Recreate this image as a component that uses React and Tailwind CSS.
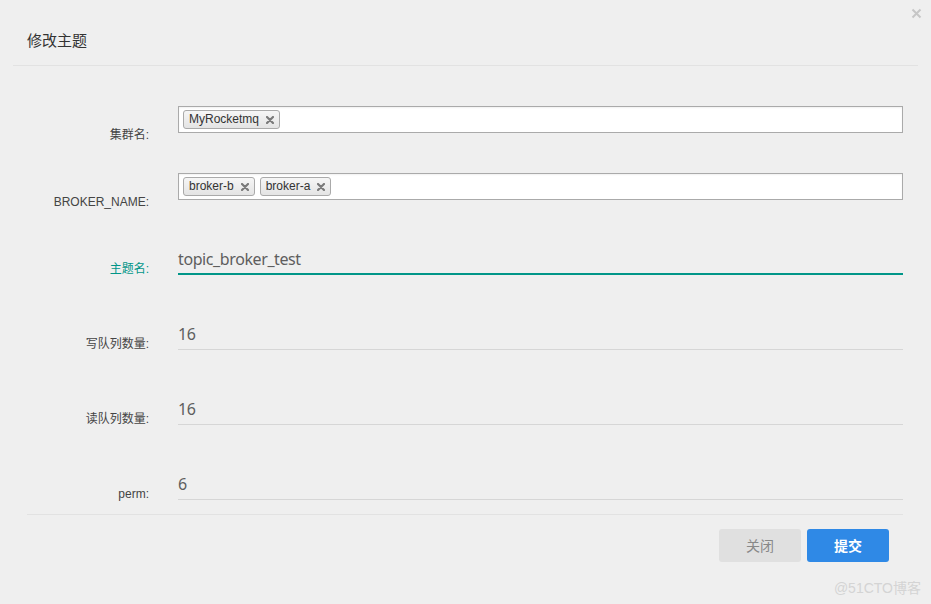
const labelFont = { fontFamily: '"Liberation Sans", "Noto Sans CJK SC", sans-serif' }

function Chip({ text }) {
  return (
    <span className="flex h-[19px] items-center gap-[7px] rounded-[3px] border border-[#aaaaaa] bg-gradient-to-b from-[#f6f6f6] to-[#e4e4e4] pl-[5px] pr-[5px] text-[12px] leading-[17px] text-[#333333]">
      {text}
      <svg width="8" height="8" viewBox="0 0 8 8" aria-hidden>
        <path d="M1 1 L7 7 M7 1 L1 7" stroke="#7a7a7a" strokeWidth="2.2" strokeLinecap="round" />
      </svg>
    </span>
  )
}

function TagRow({ label, tags, className }) {
  return (
    <div className={`flex ${className}`}>
      <div className="w-[149px] self-end -mb-[8px] text-right text-[12px] leading-[12px] text-[#444444]">
        {label}
      </div>
      <div className="ml-[29px] flex h-[27px] w-[725px] items-center gap-[5px] border border-[#aaaaaa] bg-white pl-[4px] shadow-[inset_0_1px_2px_rgba(0,0,0,0.06)]">
        {tags.map((t) => (
          <Chip key={t} text={t} />
        ))}
      </div>
    </div>
  )
}

function FieldRow({ label, value, active, className }) {
  return (
    <div className={`flex items-end ${className}`}>
      <div
        className={`w-[149px] text-right text-[12px] leading-[12px] ${active ? 'text-[#009688]' : 'text-[#444444]'}`}
      >
        {label}
      </div>
      <div
        className={`ml-[29px] w-[725px] text-[16px] leading-[24px] tracking-[-0.4px] text-[#5e5e5e] ${
          active ? 'border-b-2 border-[#009688] pb-[2px]' : 'border-b border-[#d6d6d6] pb-[3px]'
        }`}
        style={{ fontFamily: '"Noto Sans", "Open Sans", sans-serif' }}
      >
        {value}
      </div>
    </div>
  )
}

export default function App() {
  return (
    <div className="relative h-[604px] w-[931px] overflow-hidden bg-[#efefef]" style={labelFont}>
      <button type="button" className="absolute left-[911px] top-[8px]" aria-label="close">
        <svg width="11" height="11" viewBox="0 0 11 11" aria-hidden>
          <path d="M1.5 1.5 L9.5 9.5 M9.5 1.5 L1.5 9.5" stroke="#c6c6c6" strokeWidth="2" />
        </svg>
      </button>

      <div className="px-[13px]">
        <div
          className="border-b border-[#e2e2e2] pl-[14px] pt-[30px] pb-[15px] text-[15px] leading-[20px] text-[#333333]"
          style={{ fontFamily: '"Noto Sans CJK SC", sans-serif' }}
        >
          修改主题
        </div>
      </div>

      <div className="flex flex-col">
        <TagRow label="集群名:" tags={['MyRocketmq']} className="mt-[40px]" />
        <TagRow label="BROKER_NAME:" tags={['broker-b', 'broker-a']} className="mt-[40px]" />
        <FieldRow label="主题名:" value="topic_broker_test" active className="mt-[47px]" />
        <FieldRow label="写队列数量:" value="16" className="mt-[47px]" />
        <FieldRow label="读队列数量:" value="16" className="mt-[47px]" />
        <FieldRow label="perm:" value="6" className="mt-[47px]" />
      </div>

      <div className="ml-[27px] mt-[14px] w-[876px] border-t border-[#e2e2e2]" />

      <div className="flex justify-end gap-[6px] pr-[42px] pt-[14px]">
        <button
          type="button"
          className="h-[33px] w-[82px] rounded-[3px] bg-[#e0e0e0] text-[14px] text-[#888888]"
          style={{ fontFamily: '"Noto Sans CJK SC", sans-serif' }}
        >
          关闭
        </button>
        <button
          type="button"
          className="h-[33px] w-[82px] rounded-[3px] bg-[#2f89e6] text-[14px] font-bold text-white"
          style={{ fontFamily: '"Noto Sans CJK SC", sans-serif' }}
        >
          提交
        </button>
      </div>

      <div className="absolute bottom-[6px] right-[10px] text-[14px] leading-[20px] text-[#d4d4d4]">
        @51CTO博客
      </div>
    </div>
  )
}
